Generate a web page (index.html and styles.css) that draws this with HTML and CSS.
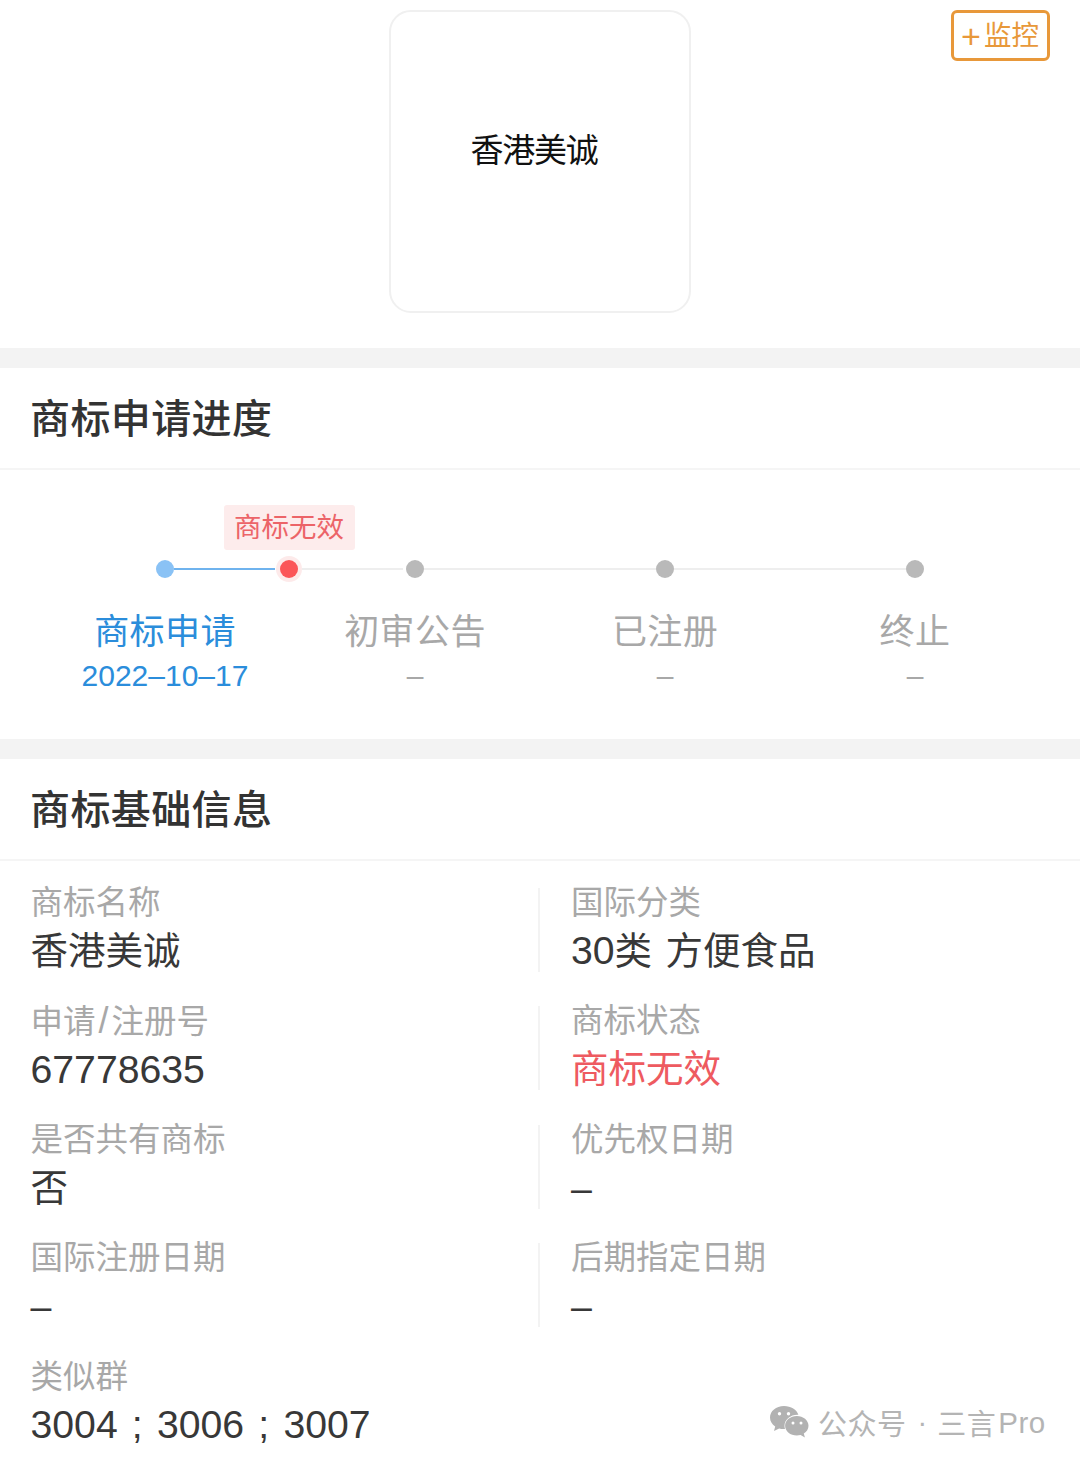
FILE: index.html
```html
<!DOCTYPE html>
<html lang="zh-CN">
<head>
<meta charset="utf-8">
<title>商标详情</title>
<link rel="stylesheet" href="styles.css">
</head>
<body>
<main class="page">
  <header class="hero">
    <div class="logo-card"><span class="logo-text">香港美诚</span></div>
    <button class="monitor" type="button"><span class="plus">+</span>监控</button>
  </header>

  <section class="section">
    <h2 class="section-title">商标申请进度</h2>
    <div class="progress">
      <div class="tag-row"><span class="tag">商标无效</span></div>
      <div class="track">
        <span class="dot dot-blue"></span>
        <span class="line line-blue"></span>
        <span class="dot dot-red"></span>
        <span class="line line-first"></span>
        <span class="dot"></span>
        <span class="line"></span>
        <span class="dot"></span>
        <span class="line"></span>
        <span class="dot"></span>
      </div>
      <div class="steps">
        <div class="step step-active"><div class="step-name">商标申请</div><div class="step-date">2022–10–17</div></div>
        <div class="step"><div class="step-name">初审公告</div><div class="step-date">–</div></div>
        <div class="step"><div class="step-name">已注册</div><div class="step-date">–</div></div>
        <div class="step"><div class="step-name">终止</div><div class="step-date">–</div></div>
      </div>
    </div>
  </section>

  <section class="section">
    <h2 class="section-title">商标基础信息</h2>
    <div class="info-grid">
      <div class="cell"><div class="label">商标名称</div><div class="value">香港美诚</div></div>
      <div class="cell cell-right"><div class="label">国际分类</div><div class="value value-spaced"><span class="num">30</span>类 方便食品</div></div>
      <div class="cell"><div class="label">申请<span class="slash">/</span>注册号</div><div class="value num">67778635</div></div>
      <div class="cell cell-right"><div class="label">商标状态</div><div class="value value-red">商标无效</div></div>
      <div class="cell"><div class="label">是否共有商标</div><div class="value">否</div></div>
      <div class="cell cell-right"><div class="label">优先权日期</div><div class="value">–</div></div>
      <div class="cell"><div class="label">国际注册日期</div><div class="value">–</div></div>
      <div class="cell cell-right"><div class="label">后期指定日期</div><div class="value">–</div></div>
      <div class="cell cell-wide"><div class="label">类似群</div><div class="value num value-groups">3004 ; 3006 ; 3007</div></div>
    </div>
  </section>

  <div class="watermark">
    <svg class="wechat" viewBox="0 0 40 34" width="40" height="34" aria-hidden="true">
      <path class="bubble" d="M15 1C7 1 1 6.200 1 12.500c0 3.700 2 6.800 5.200 8.900L5 26l5.100-2.600c1.500.4 3 .6 4.600.6.400 0 .9 0 1.300-.1-.3-1-.5-2-.5-3 0-6.300 5.800-11.200 13-11.200h.9C27.900 4.700 22 1 15 1z"/>
      <circle class="eye" cx="10.500" cy="8.800" r="1.700"/>
      <circle class="eye" cx="19.500" cy="8.800" r="1.700"/>
      <path class="bubble" d="M39.500 20.800c0-5.500-5.300-9.800-11.700-9.800S16.100 15.300 16.100 20.800s5.300 9.800 11.700 9.800c1.300 0 2.600-.2 3.800-.5l4.300 2.400-1.100-3.900c2.900-1.900 4.700-4.600 4.700-7.800z"/>
      <circle class="eye" cx="24" cy="18" r="1.500"/>
      <circle class="eye" cx="32" cy="18" r="1.500"/>
    </svg>
    <span class="watermark-cn">公众号</span><span class="watermark-dot">·</span><span class="watermark-cn">三言</span><span class="watermark-en">Pro</span>
  </div>
</main>
</body>
</html>
```

FILE: styles.css
```css
* { box-sizing: border-box; }

html, body {
  margin: 0;
  padding: 0;
  background: #fff;
}

.page {
  position: relative;
  width: 1080px;
  height: 1466px;
  overflow: hidden;
  font-family: "Liberation Sans", "Noto Sans CJK SC", sans-serif;
  color: #333;
}

.hero {
  position: relative;
  height: 348px;
  display: flex;
  justify-content: center;
  padding-top: 10px;
}

.logo-card {
  width: 302px;
  height: 303px;
  margin-right: 1px;
  border: 2px solid #f0f0f0;
  border-radius: 22px;
  display: flex;
  justify-content: center;
  padding-top: 117px;
}

.logo-text {
  font-size: 33px;
  line-height: 44px;
  letter-spacing: -1.300px;
  color: #111;
  margin-left: -11px;
}

.monitor {
  position: absolute;
  top: 10px;
  left: 951px;
  width: 99px;
  height: 51px;
  padding: 0 0 0 1px;
  border: 3px solid #e8983a;
  border-radius: 6px;
  background: #fff;
  color: #e8983a;
  font-family: inherit;
  font-size: 27.500px;
  line-height: 44px;
  display: flex;
  align-items: center;
  justify-content: center;
}

.plus {
  font-size: 34px;
  font-weight: 400;
  margin-right: 3px;
  margin-left: -2px;
}

.section {
  border-top: 20px solid #f3f3f3;
}

.section-title {
  margin: 0;
  height: 102px;
  padding-left: 30px;
  border-bottom: 2px solid #f5f5f5;
  font-size: 40px;
  font-weight: 500;
  letter-spacing: 0.400px;
  line-height: 103px;
  color: #333;
}

.progress {
  height: 269px;
  padding-top: 35px;
}

.tag-row {
  display: flex;
  padding-left: 224px;
}

.tag {
  width: 131px;
  height: 45px;
  border-radius: 3px;
  background: #fdecec;
  color: #ec6468;
  font-size: 27.500px;
  line-height: 45px;
  text-align: center;
  text-indent: -1px;
}

.track {
  display: flex;
  align-items: center;
  height: 26px;
  margin-top: 6px;
  padding-left: 156px;
}

.dot {
  flex: none;
  width: 18px;
  height: 18px;
  border-radius: 50%;
  background: #b9b9b9;
}

.dot-blue { background: #8ac2f5; }

.dot-red {
  background: #fb5558;
  box-shadow: 0 0 0 4px #fdeaea;
  margin-left: 5px;
}

.line {
  flex: none;
  width: 232px;
  height: 2px;
  background: #eeeeee;
}

.line-blue {
  width: 101px;
  background: #6fb3ee;
}

.line-first {
  width: 101px;
  margin-left: 4px;
  margin-right: 3px;
}

.steps {
  display: grid;
  grid-template-columns: repeat(4, 250px);
  padding-left: 40px;
  margin-top: 27px;
  text-align: center;
}

.step { color: #a8a8a8; }

.step-active { color: #2b8ddb; }

.step-name {
  font-size: 35px;
  letter-spacing: 0.400px;
  line-height: 46px;
}

.step-date {
  font-size: 30px;
  line-height: 42px;
}

.info-grid {
  display: grid;
  grid-template-columns: 538px 542px;
  grid-auto-rows: 84px;
  row-gap: 34.670px;
  padding-top: 26.500px;
}

.cell {
  padding-left: 30.500px;
}

.cell-right {
  border-left: 2px solid #f3f3f3;
  padding-left: 31px;
}

.cell-wide {
  grid-column: 1 / -1;
}

.label {
  color: #a8a8a8;
  font-size: 32.500px;
  line-height: 30px;
}

.slash {
  font-size: 36px;
  margin: 0 3px;
}

.value {
  margin-top: 9px;
  color: #383838;
  font-size: 37.500px;
  line-height: 48px;
}

.num { font-size: 39.200px; }

.value.num { margin-top: 8.500px; }

.value-spaced { word-spacing: 3px; }

.value-groups {
  margin-top: 9px;
  word-spacing: 3.300px;
}

.value-red { color: #ee5a60; }

.watermark {
  position: absolute;
  left: 769px;
  top: 1404px;
  display: flex;
  align-items: center;
  height: 36px;
  color: #b4b4b4;
  white-space: nowrap;
}

.wechat {
  flex: none;
  margin-right: 9px;
}

.bubble { fill: #b2b2b2; }

.eye { fill: #fff; }

.watermark-cn {
  font-size: 29px;
  letter-spacing: 0.500px;
}

.watermark-dot {
  font-size: 29px;
  margin: 0 10px 0 11px;
}

.watermark-en {
  font-size: 29.500px;
  letter-spacing: 0.500px;
  margin-left: 2px;
  padding-top: 2px;
}
```
